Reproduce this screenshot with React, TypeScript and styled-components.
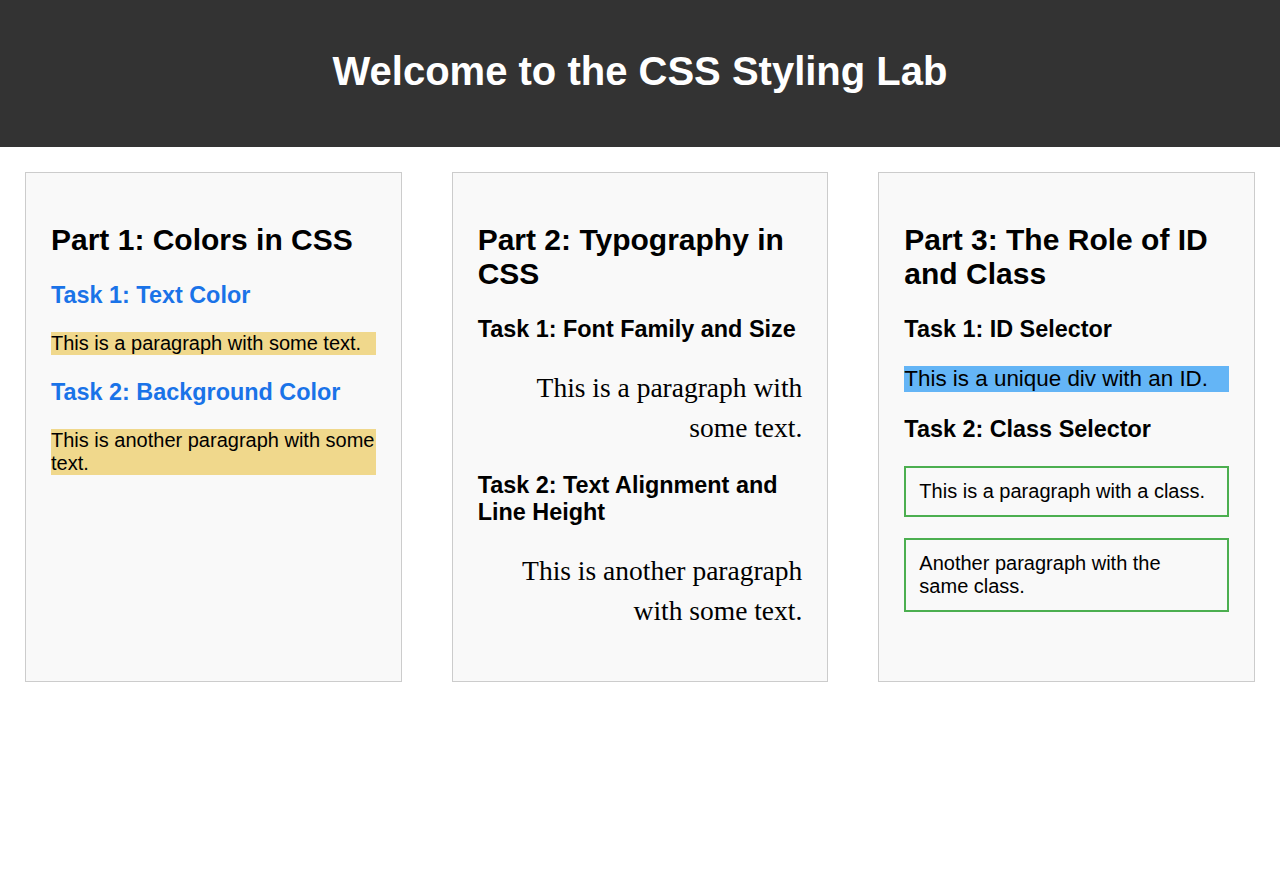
import React from "react";
import styled, { createGlobalStyle } from "styled-components";

const GlobalStyle = createGlobalStyle`
  html, body {
    margin: 0;
    padding: 0;
    background: #ffffff;
  }
  body {
    font-family: "Liberation Sans", Arial, sans-serif;
    font-size: 20px;
    color: #000;
  }
`;

const Header = styled.header`
  background: #333333;
  color: #ffffff;
  text-align: center;
  padding: 49px 20px 53px;
`;

const Title = styled.h1`
  margin: 0;
  font-size: 40px;
  font-weight: bold;
  line-height: 45px;
`;

const Main = styled.main`
  display: flex;
  align-items: stretch;
  gap: 50px;
  padding: 25px;
`;

const Card = styled.section`
  flex: 1 1 0;
  min-width: 0;
  background: #f9f9f9;
  border: 1px solid #cccccc;
  padding: 25px;
`;

const CardTitle = styled.h2`
  font-size: 30px;
  font-weight: bold;
  margin: 0.83em 0;
  line-height: normal;
`;

const TaskTitle = styled.h3<{ $blue?: boolean }>`
  font-size: 1.17em;
  font-weight: bold;
  margin: 1em 0;
  line-height: normal;
  color: ${(p) => (p.$blue ? "#1a73e8" : "#000000")};
`;

const HighlightText = styled.p`
  margin: 1em 0;
  background: #f0d88c;
  line-height: normal;
`;

const SerifText = styled.p`
  font-family: Georgia, "Liberation Serif", serif;
  font-size: 27.5px;
  line-height: 40px;
  text-align: right;
  margin: 25px 0 24.5px;
`;

const IdBox = styled.div`
  background: #64b5f6;
  font-size: 22.4px;
  line-height: normal;
`;

const ClassBox = styled.p`
  border: 2px solid #4caf50;
  padding: 12px 13px;
  margin: 21px 0;
  line-height: normal;
`;

export default function App() {
  return (
    <>
      <GlobalStyle />
      <Header>
        <Title>Welcome to the CSS Styling Lab</Title>
      </Header>
      <Main>
        <Card>
          <CardTitle>Part 1: Colors in CSS</CardTitle>
          <TaskTitle $blue>Task 1: Text Color</TaskTitle>
          <HighlightText>This is a paragraph with some text.</HighlightText>
          <TaskTitle $blue>Task 2: Background Color</TaskTitle>
          <HighlightText>This is another paragraph with some text.</HighlightText>
        </Card>
        <Card>
          <CardTitle>Part 2: Typography in CSS</CardTitle>
          <TaskTitle>Task 1: Font Family and Size</TaskTitle>
          <SerifText>This is a paragraph with some text.</SerifText>
          <TaskTitle>Task 2: Text Alignment and Line Height</TaskTitle>
          <SerifText>This is another paragraph with some text.</SerifText>
        </Card>
        <Card>
          <CardTitle>Part 3: The Role of ID and Class</CardTitle>
          <TaskTitle>Task 1: ID Selector</TaskTitle>
          <IdBox>This is a unique div with an ID.</IdBox>
          <TaskTitle>Task 2: Class Selector</TaskTitle>
          <ClassBox>This is a paragraph with a class.</ClassBox>
          <ClassBox>Another paragraph with the same class.</ClassBox>
        </Card>
      </Main>
    </>
  );
}
